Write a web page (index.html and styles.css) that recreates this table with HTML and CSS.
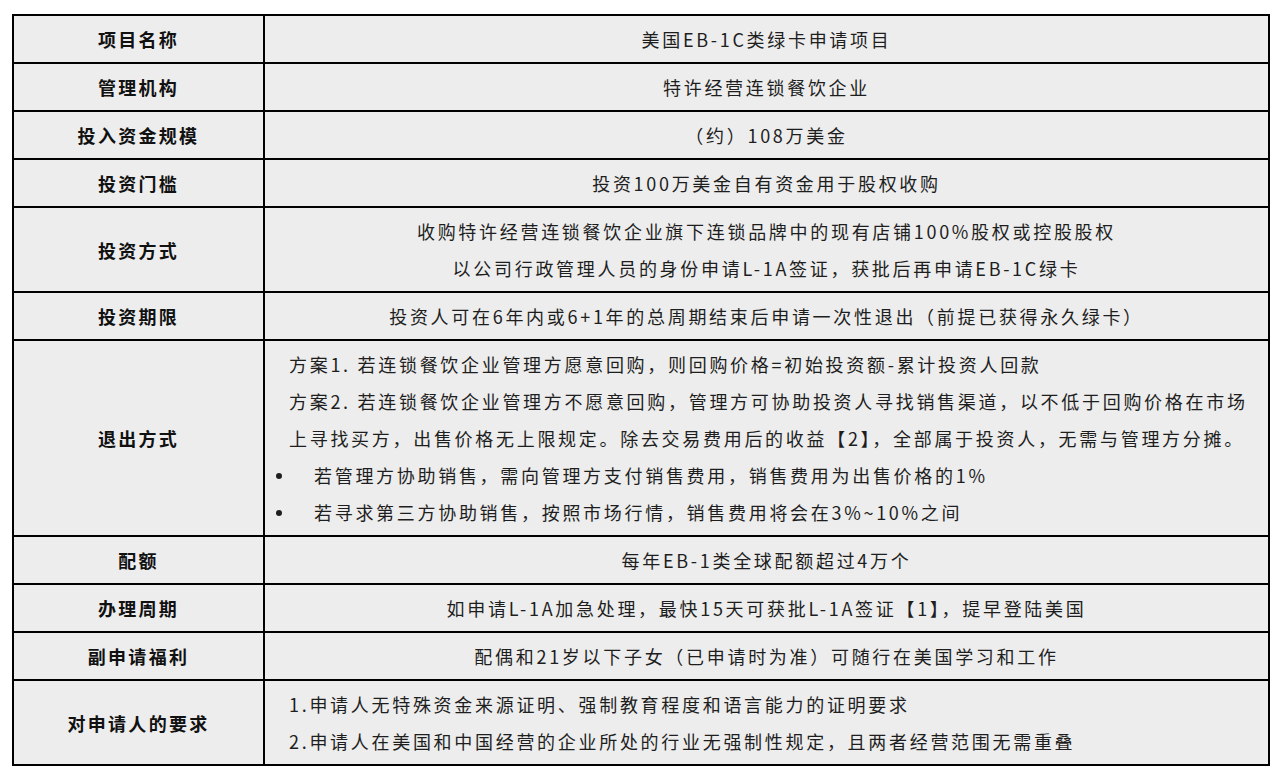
FILE: index.html
```html
<!DOCTYPE html>
<html lang="zh-CN">
<head>
<meta charset="utf-8">
<title>美国EB-1C类绿卡申请项目</title>
<link rel="stylesheet" href="styles.css">
</head>
<body>
<table class="info">
  <tr><th>项目名称</th><td>美国EB-1C类绿卡申请项目</td></tr>
  <tr><th>管理机构</th><td>特许经营连锁餐饮企业</td></tr>
  <tr><th>投入资金规模</th><td>（约）108万美金</td></tr>
  <tr><th>投资门槛</th><td>投资100万美金自有资金用于股权收购</td></tr>
  <tr><th>投资方式</th><td><div class="ln">收购特许经营连锁餐饮企业旗下连锁品牌中的现有店铺100%股权或控股股权</div><div class="ln">以公司行政管理人员的身份申请L-1A签证，获批后再申请EB-1C绿卡</div></td></tr>
  <tr><th>投资期限</th><td>投资人可在6年内或6+1年的总周期结束后申请一次性退出（前提已获得永久绿卡）</td></tr>
  <tr><th>退出方式</th><td class="left">
    <div class="ln">方案1. 若连锁餐饮企业管理方愿意回购，则回购价格=初始投资额-累计投资人回款</div>
    <div class="ln">方案2. 若连锁餐饮企业管理方不愿意回购，管理方可协助投资人寻找销售渠道，以不低于回购价格在市场</div>
    <div class="ln">上寻找买方，出售价格无上限规定。除去交易费用后的收益【2】，全部属于投资人，无需与管理方分摊。</div>
    <div class="bullet"><span class="dot"></span><span>若管理方协助销售，需向管理方支付销售费用，销售费用为出售价格的1%</span></div>
    <div class="bullet"><span class="dot"></span><span>若寻求第三方协助销售，按照市场行情，销售费用将会在3%~10%之间</span></div>
  </td></tr>
  <tr><th>配额</th><td>每年EB-1类全球配额超过4万个</td></tr>
  <tr><th>办理周期</th><td>如申请L-1A加急处理，最快15天可获批L-1A签证【1】，提早登陆美国</td></tr>
  <tr><th>副申请福利</th><td>配偶和21岁以下子女（已申请时为准）可随行在美国学习和工作</td></tr>
  <tr><th>对申请人的要求</th><td class="left">
    <div class="ln">1.申请人无特殊资金来源证明、强制教育程度和语言能力的证明要求</div>
    <div class="ln">2.申请人在美国和中国经营的企业所处的行业无强制性规定，且两者经营范围无需重叠</div>
  </td></tr>
</table>
</body>
</html>
```
FILE: styles.css
```css
html, body {
  background: #ffffff;
}
body {
  margin: 14px 0 0 12px;
  font-family: "Noto Sans CJK SC", "Noto Sans", sans-serif;
}
.info {
  border-collapse: collapse;
  width: 1258px;
  table-layout: fixed;
}
.info th, .info td {
  border: 2px solid #000;
  background: #ededed;
  padding: 5px 0 4px;
  line-height: 37px;
  font-size: 18px;
  letter-spacing: 2.7px;
  text-align: center;
  vertical-align: middle;
  white-space: nowrap;
}
.info th {
  width: 249px;
  font-weight: 700;
  color: #111;
  letter-spacing: 2.3px;
}
.info td {
  font-weight: 400;
  color: #1e1e1e;
}
.info td.left {
  text-align: left;
  padding-left: 24px;
}
.info td.left .bullet {
  display: flex;
  align-items: center;
  margin-left: -14px;
}
.bullet .dot {
  flex: none;
  width: 6px;
  height: 6px;
  border-radius: 50%;
  background: #1e1e1e;
  margin-left: 1px;
  margin-right: 32px;
}
```
